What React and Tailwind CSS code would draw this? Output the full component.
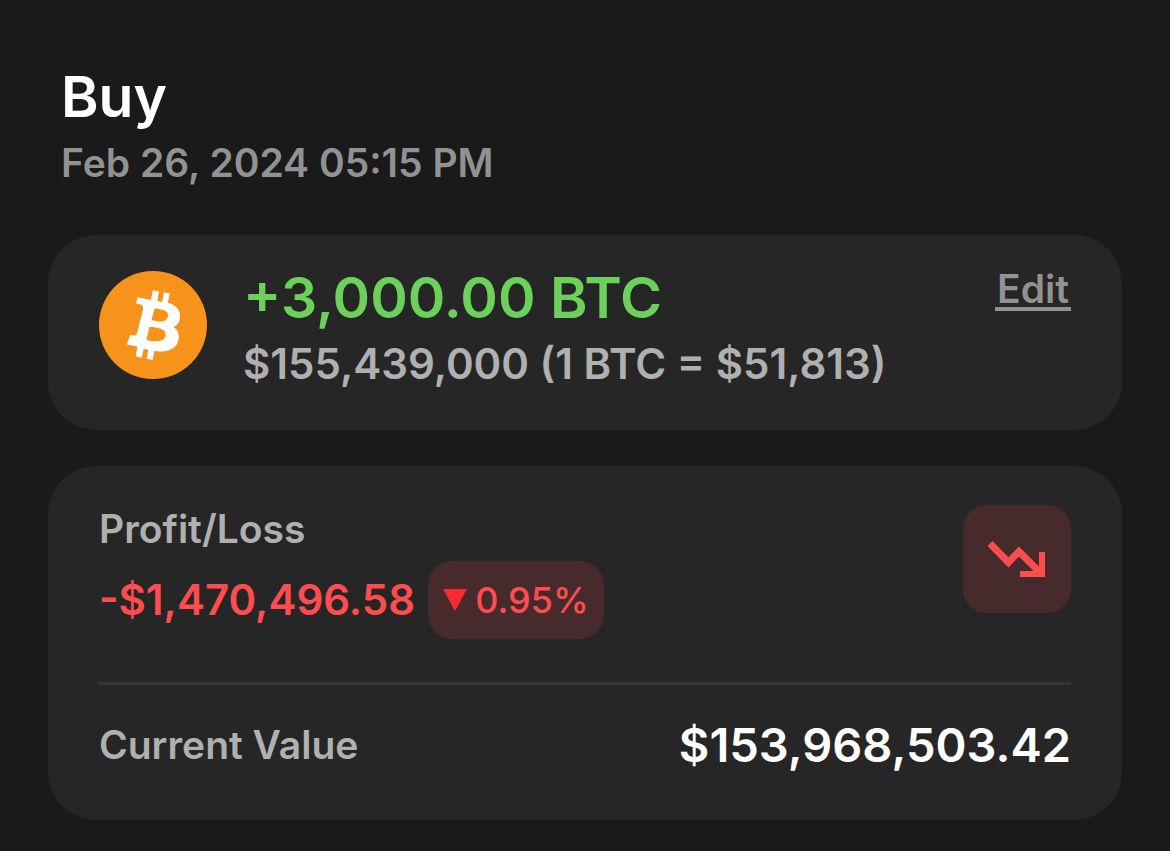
const BitcoinLogo = () => (
  <svg viewBox="0 0 108 108" className="size-27 shrink-0" aria-hidden="true">
    <circle cx="54" cy="54" r="54" fill="#f7931a" />
    <path
      fill="#fff"
      fillRule="evenodd"
      d="M38.500 26.200L52 29l1.700-9.700 6.300 1.300L58.400 30l4.700.9 1.800-9.600 5.700 1.200-1.700 9.300C77 34 81.500 39 81 46.300c-.3 5-2.700 8.200-6.500 9.700 4.500 3 6.200 7.500 5 12.800-1.700 8.200-8.500 12-19 11.700l-5.200-.6L53.700 89l-6-1.300 1.500-9-4.600-.9-1.700 9-6.200-1.400 1.700-9.800-10.800-2.100L31.200 64c4.600 1 6.200.8 6.900-2l6-24c.6-2.500-.5-3.900-3-4.500l-4-.9zM55.600 37.600L52.500 49c6.500 2 14.300 3 16.400-3.200 1.900-6.200-5.600-7.600-13.300-8.200zM50.500 55.800L47.400 69c7.500 2 17.800 2.700 19.200-4.200 1.300-6.700-8-8.500-16.100-9z"
    />
  </svg>
);

const TrendingDown = () => (
  <svg viewBox="0 0 60 38" className="h-[38px] w-15" fill="none" stroke="#ff4d4f" aria-hidden="true">
    <path d="M3 3.500l18.500 19L32 11.500l22 22" strokeWidth="7" />
    <path d="M33 34h22V12" strokeWidth="6" />
  </svg>
);

const App = () => {
  return (
    <main className="min-h-screen bg-[#1a1a1a] px-12 pt-[63px] pb-8 font-['Inter',sans-serif] font-semibold">
      <header className="px-[13px]">
        <h1 className="text-[57px] leading-[68px] text-white">Buy</h1>
        <p className="mt-2 text-[39px] leading-12 text-[#929292]">Feb 26, 2024 05:15 PM</p>
      </header>

      <section className="mt-12 flex items-start gap-9 rounded-[48px] bg-[#262626] px-[51px] pt-9 pb-[42px]">
        <BitcoinLogo />
        <div className="grow">
          <p className="text-[57px] leading-[54px] text-[#6bd15b]">+3,000.00 BTC</p>
          <p className="mt-[15px] text-[42px] leading-12 text-[#b0b0b0]">$155,439,000 (1 BTC = $51,813)</p>
        </div>
        <button
          type="button"
          className="border-b-4 border-[#929292] px-0.5 text-[39px] leading-9 text-[#929292]"
        >
          Edit
        </button>
      </section>

      <section className="mt-9 rounded-[48px] bg-[#262626] px-[51px] pt-[39px] pb-[47px]">
        <div className="flex items-start justify-between">
          <div>
            <h2 className="text-[39px] leading-12 text-[#b0b0b0]">Profit/Loss</h2>
            <div className="mt-2 flex items-center gap-[13px]">
              <p className="text-[42px] leading-12 text-[#ff4d4f]">-$1,470,496.58</p>
              <p className="flex h-[78px] items-center gap-2 rounded-3xl bg-[#472a2b] px-[15px] text-[36px] font-medium text-[#ff4d4f]">
                <svg viewBox="0 0 24 22" className="h-[22px] w-6" aria-hidden="true">
                  <path d="M0 0h24L12 22z" fill="#fa2a35" />
                </svg>
                0.95%
              </p>
            </div>
          </div>
          <div className="flex size-27 items-center justify-center rounded-3xl bg-[#472a2b]">
            <TrendingDown />
          </div>
        </div>

        <hr className="mt-[43px] border-t-3 border-[#363636]" />

        <div className="mt-8 flex items-center justify-between">
          <h2 className="text-[39px] leading-14 text-[#b0b0b0]">Current Value</h2>
          <p className="text-[47px] leading-14 text-white">$153,968,503.42</p>
        </div>
      </section>
    </main>
  );
};

export default App;
